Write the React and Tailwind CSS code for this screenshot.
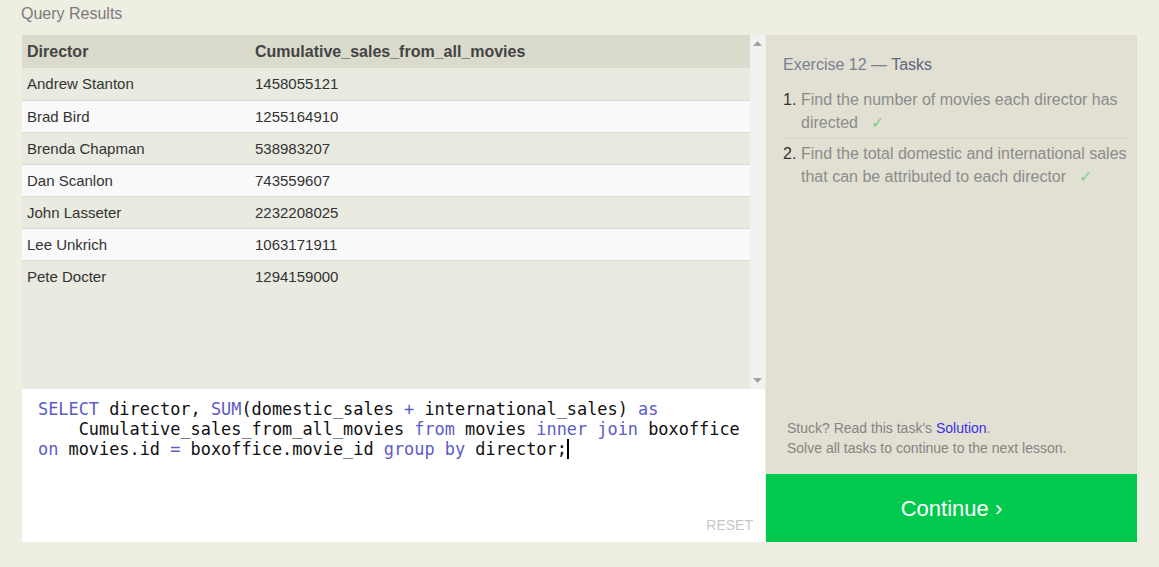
import React from "react";

const rows = [
  ["Andrew Stanton", "1458055121"],
  ["Brad Bird", "1255164910"],
  ["Brenda Chapman", "538983207"],
  ["Dan Scanlon", "743559607"],
  ["John Lasseter", "2232208025"],
  ["Lee Unkrich", "1063171911"],
  ["Pete Docter", "1294159000"],
];

const Kw = ({ children }) => <span className="text-[#5c5cc6]">{children}</span>;

const App = () => {
  return (
    <div
      className="w-[1159px] h-[567px] bg-[#efeee3] text-[#333] overflow-hidden"
      style={{ fontFamily: '"Liberation Sans", Arial, sans-serif' }}
    >
      <div className="pl-[21px] pt-[2px] h-[35px] text-[16px] text-[#7b7b7b]">Query Results</div>

      <div className="flex ml-[22px] w-[1115px] h-[507px]">
        {/* left column */}
        <div className="flex flex-col w-[743px]">
          <div className="flex h-[354px] bg-[#e9eae0]">
            <div className="flex-1">
              <div className="flex h-[33px] items-center bg-[#dadbcc] font-bold text-[16px] text-[#444]">
                <div className="w-[233px] pl-[5px]">Director</div>
                <div>Cumulative_sales_from_all_movies</div>
              </div>
              {rows.map((r, i) => (
                <div
                  key={r[0]}
                  className={
                    "flex items-center text-[15px] text-[#333] " +
                    (i === 0 ? "h-[32px] " : "h-[32px] border-t border-[#dcdcd6] ") +
                    (i % 2 === 0 ? "bg-[#e9eae0]" : "bg-[#f9f9f9]")
                  }
                >
                  <div className="w-[233px] pl-[5px] pt-[1px]">{r[0]}</div>
                  <div className="pt-[1px]">{r[1]}</div>
                </div>
              ))}
            </div>
            <div className="w-[15px] bg-[#f1f1f1] flex flex-col items-center justify-between py-[6px]">
              <svg width="9" height="5" viewBox="0 0 9 5">
                <path d="M0 5 L4.5 0 L9 5 Z" fill="#a3a3a3" />
              </svg>
              <svg width="9" height="5" viewBox="0 0 9 5">
                <path d="M0 0 L9 0 L4.5 5 Z" fill="#a3a3a3" />
              </svg>
            </div>
          </div>

          <div className="relative flex-1 bg-white pl-[16px] pt-[10px]">
            <pre
              className="text-[16.9px] leading-[20px] text-[#111] whitespace-pre"
              style={{ fontFamily: '"DejaVu Sans Mono", monospace' }}
            >
              <Kw>SELECT</Kw> director, <Kw>SUM</Kw>(domestic_sales <Kw>+</Kw> international_sales) <Kw>as</Kw>
              {"\n    "}Cumulative_sales_from_all_movies <Kw>from</Kw> movies <Kw>inner</Kw> <Kw>join</Kw> boxoffice
              {"\n"}
              <Kw>on</Kw> movies.id <Kw>=</Kw> boxoffice.movie_id <Kw>group</Kw> <Kw>by</Kw> director;
              <span className="inline-block w-[2px] h-[20px] bg-black align-top" />
            </pre>
            <div className="absolute right-[12px] bottom-[6px] text-[14px] text-[#c8c8c8]">RESET</div>
          </div>
        </div>

        {/* right column */}
        <div className="flex flex-col w-[371px] ml-[1px]">
          <div className="flex-1 bg-[#e1e0d3] pl-[17px] pr-[10px] flex flex-col">
            <div className="pt-[18px] text-[16px] text-[#7b7f8e]">
              Exercise 12 — <span className="text-[#5f6580]">Tasks</span>
            </div>
            <ol className="mt-[11px] text-[16px] leading-[23px] text-[#8c8c8c]">
              <li className="flex pb-[4px] border-b border-[#d3d3c6]">
                <span className="w-[18px] text-[#333]">1.</span>
                <span className="flex-1">
                  Find the number of movies each director has directed
                  <span className="text-[#7dd08c] ml-[13px]">✓</span>
                </span>
              </li>
              <li className="flex pt-[3px]">
                <span className="w-[18px] text-[#333]">2.</span>
                <span className="flex-1">
                  Find the total domestic and international sales that can be attributed to each director
                  <span className="text-[#7dd08c] ml-[13px]">✓</span>
                </span>
              </li>
            </ol>
            <div className="mt-auto pb-[16px] pl-[4px] text-[14px] leading-[20px] text-[#8a8282]">
              <div>
                Stuck? Read this task's <span className="text-[#3b2fe6]">Solution</span>.
              </div>
              <div>Solve all tasks to continue to the next lesson.</div>
            </div>
          </div>
          <div className="h-[68px] bg-[#00c94e] flex items-center justify-center text-white text-[22px]">
            Continue ›
          </div>
        </div>
      </div>
    </div>
  );
};

export default App;
